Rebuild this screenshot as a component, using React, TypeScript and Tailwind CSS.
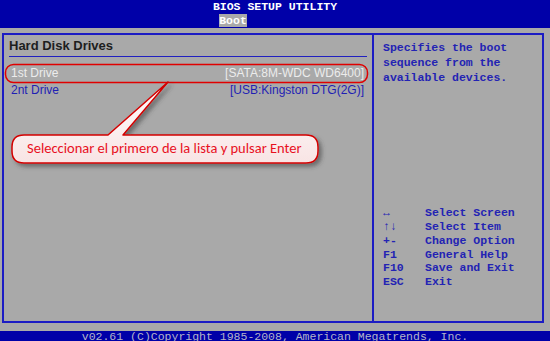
import React from 'react';

const drives = [
  { name: '1st Drive', value: '[SATA:8M-WDC WD6400]', active: true },
  { name: '2nt Drive', value: '[USB:Kingston DTG(2G)]', active: false },
];

const keys = [
  ['↔', 'Select Screen'],
  ['↑↓', 'Select Item'],
  ['+-', 'Change Option'],
  ['F1', 'General Help'],
  ['F10', 'Save and Exit'],
  ['ESC', 'Exit'],
];

const mono = { fontFamily: '"Liberation Mono", "DejaVu Sans Mono", monospace' };

const Callout = () => (
  <>
    <svg className="absolute left-0 top-0 pointer-events-none" width="550" height="341" viewBox="0 0 550 341">
      <defs>
        <linearGradient id="bubbleFill" x1="0" y1="0" x2="0" y2="1">
          <stop offset="0" stopColor="#ffffff" />
          <stop offset="1" stopColor="#f8e4e4" />
        </linearGradient>
        <filter id="bubbleShadow" x="-10%" y="-30%" width="120%" height="160%">
          <feDropShadow dx="3" dy="3" stdDeviation="2" floodColor="#3a3a3a" floodOpacity="0.55" />
        </filter>
      </defs>
      {/* box around the first drive */}
      <rect x="5.5" y="64.5" width="362" height="18" rx="8" fill="none" stroke="#e00000" strokeWidth="1.5" />
      {/* speech bubble with tail */}
      <path
        d="M24,135 L108,135 L168,82 L123,135 L306,135 Q318,135 318,147 L318,151 Q318,163 306,163 L24,163 Q12,163 12,151 L12,147 Q12,135 24,135 Z"
        fill="url(#bubbleFill)"
        stroke="#d40000"
        strokeWidth="1.5"
        strokeLinejoin="round"
        filter="url(#bubbleShadow)"
      />
    </svg>
    <span
      className="absolute left-[27px] top-[140px] text-[14.5px] leading-[17px] text-[#e8101e] whitespace-nowrap"
      style={{ fontFamily: 'Carlito, "Liberation Sans", Arial, sans-serif' }}
    >
      Seleccionar el primero de la lista y pulsar Enter
    </span>
  </>
);

export default function App() {
  return (
    <div className="relative w-[550px] h-[341px] bg-[#a9a9a9] flex flex-col overflow-hidden">
      <div className="h-[28px] bg-[#0000a8] flex flex-col text-white font-bold text-[11.5px]" style={mono}>
        <div className="h-[14px] leading-[14px] text-center">BIOS SETUP UTILITY</div>
        <div className="ml-[219px] w-[28px] h-[13px] leading-[13px] bg-[#a9a9a9] text-center">Boot</div>
      </div>

      <div className="flex-1 ml-[2px] mr-[6px] mt-[5px] mb-[8px] border-2 border-[#1c1cc4] flex">
        <div className="w-[370px] border-r-2 border-[#1c1cc4] flex flex-col" style={{ fontFamily: 'Tahoma, "Liberation Sans", Arial, sans-serif' }}>
          <div className="mx-[5px] mt-[3px] h-[19px] leading-[16px] text-[13px] font-bold text-[#1e1e1e] border-b border-[#2020c0]">
            Hard Disk Drives
          </div>
          <div className="mt-[8px] flex flex-col">
            {drives.map(d => (
              <div
                key={d.name}
                className={`h-[17px] leading-[17px] pl-[7px] pr-[8px] flex justify-between text-[12px] ${d.active ? 'text-[#ececec]' : 'text-[#1f1fb4]'}`}
              >
                <span>{d.name}</span>
                <span>{d.value}</span>
              </div>
            ))}
          </div>
        </div>

        <div className="flex-1 flex flex-col pl-[9px] text-[11.5px] font-bold text-[#2323b4]" style={mono}>
          <div className="mt-[5px] leading-[15px]">
            <div>Specifies the boot</div>
            <div>sequence from the</div>
            <div>available devices.</div>
          </div>
          <div className="mt-auto mb-[32px] leading-[13.8px]">
            {keys.map(([k, label]) => (
              <div key={label} className="flex">
                <span className="w-[42px]">{k}</span>
                <span>{label}</span>
              </div>
            ))}
          </div>
        </div>
      </div>

      <div
        className="h-[10px] bg-[#0000a8] text-[#b4b4c8] text-[11.5px] leading-[12px] text-center whitespace-nowrap overflow-hidden"
        style={mono}
      >
        v02.61 (C)Copyright 1985-2008, American Megatrends, Inc.
      </div>

      <Callout />
    </div>
  );
}
